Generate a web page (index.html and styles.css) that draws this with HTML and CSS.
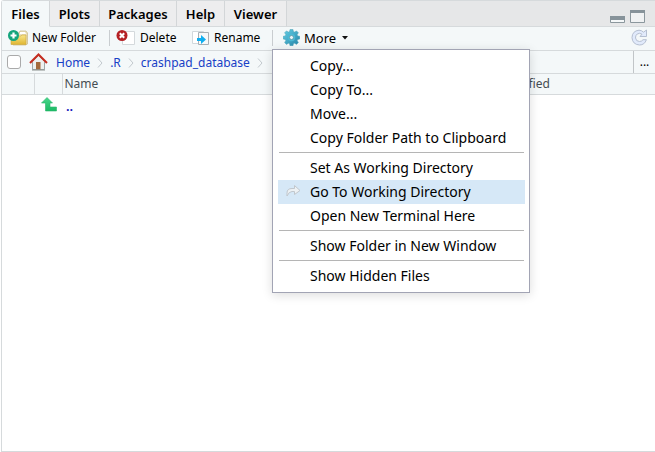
FILE: index.html
```html
<!DOCTYPE html>
<html lang="en">
<head>
<meta charset="utf-8">
<title>Files</title>
<link rel="stylesheet" href="styles.css">
</head>
<body>
<main class="pane">
  <header class="tabbar">
    <nav class="tabs">
      <button class="tab active">Files</button>
      <button class="tab plots">Plots</button>
      <button class="tab packages">Packages</button>
      <button class="tab">Help</button>
      <button class="tab viewer">Viewer</button>
    </nav>
    <div class="window-buttons">
      <button class="winbtn" aria-label="Minimize"><svg width="15" height="13" viewBox="0 0 15 13"><path d="M.5 6.500h14v6H.5z" fill="#f5f8f9" stroke="#8b979d"/><path d="M0 6h15v4H0z" fill="#87939a"/></svg></button>
      <button class="winbtn" aria-label="Maximize"><svg width="15" height="13" viewBox="0 0 15 13"><path d="M.5 .5h14v12H.5z" fill="#f0f2f3" stroke="#8b979d"/><path d="M0 0h15v3H0z" fill="#87939a"/></svg></button>
    </div>
  </header>

  <div class="toolbar">
    <button class="tool new">
      <svg width="20" height="17" viewBox="0 0 20 17"><defs><linearGradient id="fold" x2="0" y2="1"><stop stop-color="#f9e68c"/><stop offset="1" stop-color="#dfb631"/></linearGradient></defs><path d="M5 4h6l1-2h6l1.500 2v11l-2 1H5z" fill="#e9dfbd" stroke="#c9b985" stroke-width=".7"/><path d="M12 3h5l1 2h-6z" fill="#fff"/><path d="M3 7h10l1-1h4v9.500H3z" fill="url(#fold)" stroke="#cda83c" stroke-width=".6"/><circle cx="5.500" cy="6.500" r="5.500" fill="#14a57c"/><path d="M5.500 3.500v6M2.500 6.500h6" stroke="#fff" stroke-width="2.200"/></svg>
      <span>New Folder</span>
    </button>
    <span class="rule"></span>
    <button class="tool delete">
      <svg width="20" height="17" viewBox="0 0 20 17"><path d="M6.500 2.500h12v13h-12z" fill="#fff" stroke="#d4d9dc"/><circle cx="6" cy="6.500" r="5.500" fill="#b52125"/><path d="M3.800 4.300l4.400 4.400M8.200 4.300L3.800 8.700" stroke="#fff" stroke-width="2.100"/></svg>
      <span>Delete</span>
    </button>
    <button class="tool rename">
      <svg width="18" height="17" viewBox="0 0 18 17"><path d="M.5 2.500h11v12H.5z" fill="#fff" stroke="#d1d8dc"/><path d="M6.500 3.500h10v12h-10z" fill="#f6f8f9" stroke="#a7afb4"/><path d="M5 9h4V6l5 4.500L9 15v-3H5z" fill="#10aeef"/></svg>
      <span>Rename</span>
    </button>
    <span class="rule"></span>
    <div class="more-wrap">
      <button class="tool more" aria-haspopup="menu" aria-expanded="true">
        <svg width="17" height="17" viewBox="0 0 17 17"><defs><linearGradient id="gear" x2="1" y2="1"><stop stop-color="#65cfe4"/><stop offset="1" stop-color="#2483a8"/></linearGradient></defs><path d="M7 .5h3l.4 2.100 1.300.5 1.800-1.200 1.900 1.900-1.200 1.800.5 1.300 2.100.4v2.700l-2.100.4-.5 1.300 1.200 1.800-1.900 1.900-1.800-1.200-1.300.5-.4 2.100H7l-.4-2.100-1.300-.5-1.800 1.200-1.900-1.900 1.200-1.800-.5-1.300L.2 10V7.300l2.100-.4.5-1.300-1.200-1.800 1.900-1.900 1.800 1.200 1.300-.5z" fill="url(#gear)" stroke="#4ba0b5" stroke-width=".5"/><circle cx="8.500" cy="8.500" r="3.700" fill="#4cb9d4"/><circle cx="8.500" cy="8.500" r="2" fill="#ecf6f8" stroke="#5a8fa0" stroke-width=".7"/></svg>
        <span>More</span>
        <svg class="caret" width="6" height="4" viewBox="0 0 6 4"><path d="M0 0h6L3 3.500z" fill="#111"/></svg>
      </button>
      <div class="menu" role="menu">
        <button role="menuitem">Copy...</button>
        <button role="menuitem">Copy To...</button>
        <button role="menuitem">Move...</button>
        <button role="menuitem">Copy Folder Path to Clipboard</button>
        <hr>
        <button role="menuitem">Set As Working Directory</button>
        <button role="menuitem" class="selected"><svg width="15" height="12" viewBox="0 0 15 12"><path d="M1 11V8q0-4.500 5-4.500h2.500v-3L14 5.500 8.500 9.500v-3H6Q3 6.500 1 11z" fill="#edf1f4" stroke="#c1c7cd" stroke-linejoin="round"/></svg>Go To Working Directory</button>
        <button role="menuitem">Open New Terminal Here</button>
        <hr>
        <button role="menuitem">Show Folder in New Window</button>
        <hr>
        <button role="menuitem">Show Hidden Files</button>
      </div>
    </div>
    <button class="tool refresh" aria-label="Refresh">
      <svg width="17" height="17" viewBox="0 0 17 17"><path d="M12.500 3.200L15.500 1v6.500H9l2-2.300Q8.500 3.500 6.200 5 4.300 6.500 4.500 9q.5 3.500 4 3.500 2.300 0 3.500-1.800h3.400Q13.600 16 8.500 16 1.500 15.500 1 8.700 1.200 1.900 8 1.200q2.600 0 4.500 2z" fill="#e1eafb" stroke="#b5bfd1"/></svg>
    </button>
  </div>

  <div class="pathbar">
    <input class="check" type="checkbox" aria-label="Select all files">
    <svg class="house" width="19" height="18" viewBox="0 0 19 18"><path d="M3.500 8.500l6-6 6 6v8h-12z" fill="#edf0ef" stroke="#9fa8a8"/><path d="M7 9h4.500v7.500H7z" fill="#a36a3c"/><path d="M3 17h13" stroke="#89908e"/><path d="M1 10l8.500-8.500L18 10" fill="none" stroke="#c52d20" stroke-width="2"/></svg>
    <nav class="crumbs">
      <a href="#">Home</a><svg class="chev" width="6" height="10" viewBox="0 0 6 10"><path d="M1 .5L5 5 1 9.500"/></svg>
      <a href="#">.R</a><svg class="chev" width="6" height="10" viewBox="0 0 6 10"><path d="M1 .5L5 5 1 9.500"/></svg>
      <a href="#">crashpad_database</a><svg class="chev" width="6" height="10" viewBox="0 0 6 10"><path d="M1 .5L5 5 1 9.500"/></svg>
    </nav>
    <button class="browse">...</button>
  </div>

  <table class="files">
    <colgroup><col class="c-check"><col class="c-icon"><col><col class="c-modified"></colgroup>
    <thead><tr><th></th><th></th><th>Name</th><th>Modified</th></tr></thead>
    <tbody><tr>
      <td></td>
      <td class="icon"><svg width="16" height="15" viewBox="0 0 16 15"><defs><linearGradient id="up" x2="0" y2="1"><stop stop-color="#49d78b"/><stop offset="1" stop-color="#1bb963"/></linearGradient></defs><path d="M6 .5L11.500 6H9v4h6.500v4H4.500V6H.5z" fill="url(#up)" stroke="#2ab56b" stroke-width=".6"/></svg></td>
      <td><a class="parent" href="#">..</a></td>
      <td></td>
    </tr></tbody>
  </table>
</main>
</body>
</html>
```
FILE: styles.css
```css
* { box-sizing: border-box; }
body {
  margin: 0;
  background: #fff;
  color: #000;
  font: 13px/16px "Noto Sans", "Lucida Grande", sans-serif;
}
button {
  margin: 0;
  padding: 0;
  border: 0;
  background: none;
  color: inherit;
  font: inherit;
}
svg { display: block; flex: none; }
a { text-decoration: none; }

.pane {
  min-height: 100vh;
  margin-left: 1px;
  border: 1px solid #d6dadc;
  border-right: 0;
  border-top-left-radius: 3px;
}

.tabbar {
  display: flex;
  justify-content: space-between;
  height: 26px;
  background: #e6e7e8;
  box-shadow: inset 0 -1px #d6dadc;
}
.tabs { display: flex; }
.tab {
  min-width: 48px;
  padding: 0 8px;
  border-right: 1px solid #d3d6d8;
  border-bottom: 1px solid #d6dadc;
  background: #ededee;
  font-weight: 600;
}
.tab.active { background: #f4f8f9; border-bottom-color: #f4f8f9; }
.tab.plots { min-width: 50px; }
.tab.packages { min-width: 77px; }
.tab.viewer { min-width: 62px; }
.window-buttons {
  display: flex;
  align-items: center;
  gap: 5px;
  padding: 4px 10px 0 0;
}

.toolbar {
  display: flex;
  align-items: center;
  height: 24px;
  padding: 0 7px 2px 6px;
  border-bottom: 1px solid #d6dadc;
  background: #f4f8f9;
  font-size: 12px;
}
.tool { display: flex; align-items: center; gap: 4px; }
.new { width: 101px; }
.delete { width: 76px; margin-left: 6px; }
.rename { width: 80px; }
.rule { width: 1px; height: 16px; background: #c9cdd0; }
.more-wrap { position: relative; margin-left: 10px; }
.more { font-size: 13px; line-height: 18px; }
.caret { margin-left: 2px; }
.refresh { margin-left: auto; }

.menu {
  position: absolute;
  z-index: 2;
  top: 20px;
  left: -11px;
  width: 258px;
  padding: 4px 4px 4px 5px;
  border: 1px solid #a2a4b4;
  background: #fff;
  box-shadow: 0 2px 10px rgba(0, 0, 0, .14);
  font-size: 14px;
}
.menu button {
  display: block;
  position: relative;
  width: 100%;
  height: 24px;
  padding-left: 32px;
  text-align: left;
  white-space: nowrap;
}
.menu .selected { background: #d6e8f7; }
.menu svg { position: absolute; left: 8px; top: 5px; }
.menu hr { height: 1px; margin: 2px 1px 3px; border: 0; background: #b5b5b5; }

.pathbar {
  display: flex;
  align-items: center;
  height: 23px;
  padding-left: 5px;
  border-bottom: 1px solid #d6dadc;
  background: #f4f8f9;
  font-size: 12px;
}
.check {
  appearance: none;
  width: 14px;
  height: 14px;
  margin: 0;
  border: 1px solid #aaa;
  border-radius: 3px;
  background: #fff;
}
.house { margin-left: 8px; }
.crumbs { display: flex; align-items: center; gap: 7px; margin-left: 8px; padding-top: 2px; }
.crumbs a { color: #1740c6; }
.chev path { fill: none; stroke: #c2c8cd; }
.browse {
  align-self: stretch;
  width: 22px;
  margin-left: auto;
  border-left: 1px solid #c1c5c8;
}

.files { width: 100%; border-collapse: collapse; table-layout: fixed; }
.c-check { width: 32px; }
.c-icon { width: 28px; }
.c-modified { width: 157px; }
.files th {
  height: 20px;
  padding: 0 2px;
  border-bottom: 1px solid #d6dadc;
  background: #f4f8f9;
  color: #454d52;
  font-size: 12px;
  font-weight: 400;
  text-align: left;
}
.files th:nth-child(-n+2) { border-right: 1px solid #d6dadc; }
.files td { height: 24px; padding: 0 4px; }
.files .icon { padding: 0 0 3px 7px; }
.parent { color: #1111bb; font-weight: 600; }
```
